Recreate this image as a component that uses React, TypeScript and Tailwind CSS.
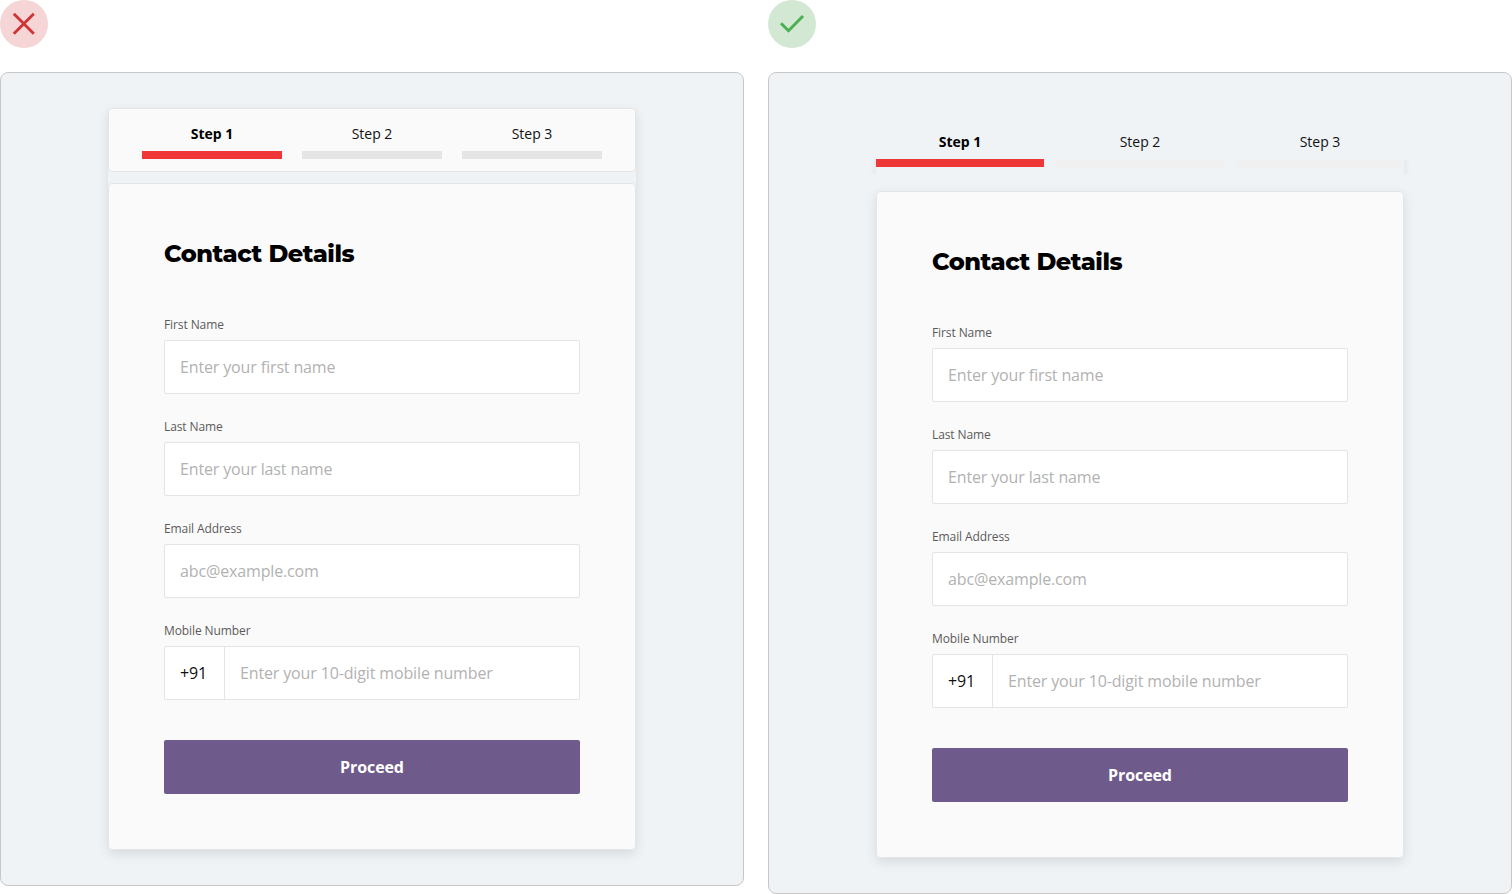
import React from "react";

type StepsVariant = "boxed" | "plain";

function Steps({ variant }: { variant: StepsVariant }) {
  const boxed = variant === "boxed";
  return (
    <ol
      className={
        boxed
          ? "grid h-16 grid-cols-3 gap-5 rounded border border-[#e5e5e5] bg-[#fafafa] px-[33px] pt-[15px]"
          : "relative grid h-11 grid-cols-3 gap-3 before:absolute before:right-full before:bottom-0.5 before:h-3.5 before:w-1.5 before:bg-linear-to-l before:from-black/4 before:to-transparent after:absolute after:bottom-0.5 after:left-full after:h-3.5 after:w-1.5 after:bg-linear-to-r after:from-black/4 after:to-transparent"
      }
    >
      {["Step 1", "Step 2", "Step 3"].map((label, i) => (
        <li key={label} className="flex flex-col gap-[7px]">
          <span
            className={
              i === 0
                ? "text-center text-sm leading-5 font-bold text-black"
                : "text-center text-sm leading-5 text-[#111]"
            }
          >
            {label}
          </span>
          <span
            className={
              i === 0 ? "h-2 bg-[#ef3737]" : boxed ? "h-2 bg-[#e5e5e5]" : "h-2 bg-[#f0f0f0]"
            }
          />
        </li>
      ))}
    </ol>
  );
}

function Field({ label, placeholder, prefix }: { label: string; placeholder: string; prefix?: string }) {
  return (
    <label className="block">
      <span className="block h-6 pt-px text-xs leading-4 tracking-[-0.1px] text-[#5a5a5a]">{label}</span>
      <span className="flex h-[54px] rounded-xs border border-[#e4e4e4] bg-white">
        {prefix && (
          <span className="flex w-[60px] items-center border-r border-[#e4e4e4] pl-[15px] text-base tracking-[-0.14px] text-[#111]">
            {prefix}
          </span>
        )}
        <input
          type="text"
          placeholder={placeholder}
          className="min-w-0 flex-1 px-[15px] text-base tracking-[-0.14px] outline-none [font-feature-settings:'liga'_1] placeholder:text-[#b2b2b2]"
        />
      </span>
    </label>
  );
}

function ContactForm() {
  return (
    <form className="h-[667px] rounded border border-[#e5e5e5] bg-[#fafafa] px-[55px] pt-[54px]">
      <h2 className="h-[78px] font-['Montserrat','Inter',sans-serif] text-2xl leading-8 font-extrabold tracking-[-0.42px] whitespace-nowrap text-black">
        Contact Details
      </h2>
      <div className="grid gap-6">
        <Field label="First Name" placeholder="Enter your first name" />
        <Field label="Last Name" placeholder="Enter your last name" />
        <Field label="Email Address" placeholder="abc@example.com" />
        <Field label="Mobile Number" placeholder="Enter your 10-digit mobile number" prefix="+91" />
      </div>
      <button
        type="button"
        className="mt-10 h-[54px] w-full rounded-xs bg-[#6f5b8b] text-base font-bold tracking-[-0.1px] text-white"
      >
        Proceed
      </button>
    </form>
  );
}

export default function App() {
  return (
    <main className="grid h-[894px] w-[1512px] grid-cols-2 items-start gap-6 bg-white font-['Open_Sans','Noto_Sans',sans-serif]">
      <section>
        <div className="flex size-12 items-center justify-center rounded-full bg-[#f5d5d5]">
          <svg viewBox="0 0 48 48" className="size-12" fill="none" stroke="#cf3434" strokeWidth="2.8">
            <path d="M13.8 13.8 33.8 33.8M33.8 13.8 13.8 33.8" />
          </svg>
        </div>
        <div className="mt-6 flex h-[814px] justify-center rounded-lg border border-[#c8c8c8] bg-[#eff3f6] pt-[35px]">
          <div className="flex h-[742px] w-[528px] flex-col gap-[11px] rounded bg-[#eff3f6] shadow-[0_4px_12px_rgba(0,0,0,0.1)]">
            <Steps variant="boxed" />
            <ContactForm />
          </div>
        </div>
      </section>
      <section>
        <div className="flex size-12 items-center justify-center rounded-full bg-[#d2e8d3]">
          <svg viewBox="0 0 48 48" className="size-12" fill="none" stroke="#4caf50" strokeWidth="3">
            <path d="M13 23.2 20.5 30.7 35 16" />
          </svg>
        </div>
        <div className="mt-6 flex h-[822px] justify-center rounded-lg border border-[#c8c8c8] bg-[#eff3f6] pt-[59px]">
          <div className="flex w-[528px] flex-col gap-[15px]">
            <Steps variant="plain" />
            <div className="rounded shadow-[0_4px_12px_rgba(0,0,0,0.1)]">
              <ContactForm />
            </div>
          </div>
        </div>
      </section>
    </main>
  );
}
